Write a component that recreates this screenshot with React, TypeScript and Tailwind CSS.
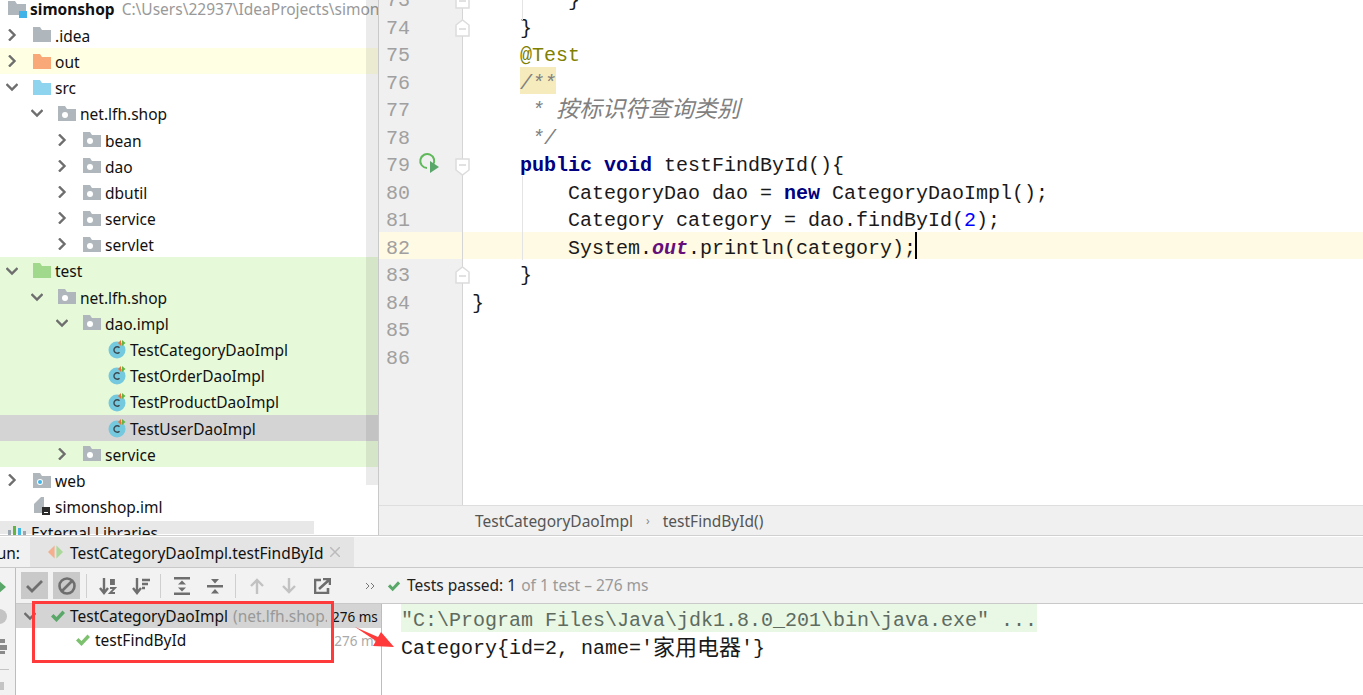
import React from 'react';

const Chevron = ({ open }: { open?: boolean }) => (
  <svg width="12" height="12" viewBox="0 0 12 12" fill="none" stroke="#6e6e6e" strokeWidth="2.4" className="shrink-0">
    {open ? <path d="M0.5 3 6 8.5 11.5 3" /> : <path d="M3 0.5 8.5 6 3 11.5" />}
  </svg>
);

const Folder = ({ color = '#afb7bd', dot }: { color?: string; dot?: string }) => (
  <svg width="18" height="15" viewBox="0 0 18 15" className="shrink-0">
    <path d="M0 0h7l2 3h9v12H0z" fill={color} />
    {dot && <circle cx="7" cy="9" r="3" fill="#fff" />}
    {dot && dot !== '#fff' && <circle cx="7" cy="9" r="2" fill={dot} />}
  </svg>
);

const ClassIcon = () => (
  <svg width="19" height="20" viewBox="0 0 19 20" className="shrink-0">
    <circle cx="9" cy="11" r="8.5" fill="#74c9de" />
    <path d="M11.5 8.8a3.2 3.2 0 1 0 0 4.4" fill="none" stroke="#3c4a50" strokeWidth="1.4" />
    <path d="M13 1v6l-3-3z" fill="#e8743c" />
    <path d="M14 1v6l3.5-3z" fill="#62b543" />
  </svg>
);

const ImlIcon = () => (
  <svg width="18" height="20" viewBox="0 0 18 20" className="shrink-0">
    <path d="M1 8l7-7h3v16H1z" fill="#afb7bd" />
    <rect x="9" y="11" width="8" height="8" fill="#2b2b2b" />
    <rect x="11" y="16" width="4" height="1" fill="#fff" />
  </svg>
);

type Row = {
  depth: number;
  label: string;
  open?: boolean;
  leaf?: boolean;
  icon: React.ReactNode;
  bg?: string;
};

const pkg = <Folder dot="#fff" />;
const green = 'bg-[#e6f9d9]';

const rows: Row[] = [
  { depth: 0, label: '.idea', icon: <Folder /> },
  { depth: 0, label: 'out', icon: <Folder color="#f9a878" />, bg: 'bg-[#ffffe4]' },
  { depth: 0, label: 'src', open: true, icon: <Folder color="#8ed4ee" /> },
  { depth: 1, label: 'net.lfh.shop', open: true, icon: pkg },
  { depth: 2, label: 'bean', icon: pkg },
  { depth: 2, label: 'dao', icon: pkg },
  { depth: 2, label: 'dbutil', icon: pkg },
  { depth: 2, label: 'service', icon: pkg },
  { depth: 2, label: 'servlet', icon: pkg },
  { depth: 0, label: 'test', open: true, icon: <Folder color="#a0d88c" />, bg: green },
  { depth: 1, label: 'net.lfh.shop', open: true, icon: pkg, bg: green },
  { depth: 2, label: 'dao.impl', open: true, icon: pkg, bg: green },
  { depth: 3, label: 'TestCategoryDaoImpl', leaf: true, icon: <ClassIcon />, bg: green },
  { depth: 3, label: 'TestOrderDaoImpl', leaf: true, icon: <ClassIcon />, bg: green },
  { depth: 3, label: 'TestProductDaoImpl', leaf: true, icon: <ClassIcon />, bg: green },
  { depth: 3, label: 'TestUserDaoImpl', leaf: true, icon: <ClassIcon />, bg: 'bg-[#d4d4d4]' },
  { depth: 2, label: 'service', icon: pkg, bg: green },
  { depth: 0, label: 'web', icon: <Folder dot="#3fb3e8" /> },
  { depth: 0, label: 'simonshop.iml', leaf: true, icon: <ImlIcon /> },
];

const indents = ['pl-[6px]', 'pl-[31px]', 'pl-[56px]', 'pl-[81px]'];

const Tree = () => (
  <div className="relative w-[379px] h-full overflow-hidden border-r border-[#c9c9c9] text-[15.5px] text-[#111]">
    <div className="-mt-[4.4px]">
      <div className="h-[26.2px] flex items-center pl-[8px] whitespace-nowrap">
        <svg width="20" height="20" viewBox="0 0 20 20" className="mr-[2px] shrink-0">
          <path d="M0 2h7l2 3h9v11H0z" fill="#afb7bd" />
          <rect x="11" y="12" width="8" height="7" fill="#3fb3e8" />
        </svg>
        <span className="font-bold pt-[2px]">simonshop</span>
        <span className="ml-[7px] pt-[2px] text-[#999]">C:\Users\22937\IdeaProjects\simonshop</span>
      </div>
      {rows.map((r, i) => (
        <div key={i} className={`h-[26.2px] flex items-center whitespace-nowrap ${indents[r.depth]} ${r.bg ?? ''}`}>
          <div className="w-[27px] flex">{!r.leaf && <Chevron open={r.open} />}</div>
          <div className="w-[22px] flex">{r.icon}</div>
          <span className="pt-[3px]">{r.label}</span>
        </div>
      ))}
      <div className="relative h-[26.2px] flex items-center pl-[8px] whitespace-nowrap">
        <div className="absolute left-0 top-[1.6px] w-[315px] h-[13px] bg-[#e8e8e8] border-r border-white" />
        <svg width="18" height="14" viewBox="0 0 18 14" className="relative mr-[5px]">
          <rect x="0" y="5" width="3" height="9" fill="#9aa7b0" />
          <rect x="5" y="1" width="3" height="13" fill="#62b543" />
          <rect x="10" y="3" width="3" height="11" fill="#40b6e0" />
          <rect x="15" y="6" width="3" height="8" fill="#9aa7b0" />
        </svg>
        <span className="relative pt-[3px]">External Libraries</span>
      </div>
    </div>
    {/* scrollbar */}
    <div className="absolute left-[366px] top-0 w-[12px] h-[485px] bg-black/[0.08]" />
  </div>
);

const Fold = ({ up }: { up?: boolean }) => (
  <svg
    width="15"
    height="18"
    viewBox="0 0 15 18"
    className={`absolute left-[76px] ${up ? 'top-[7px]' : 'top-[9px]'}`}
  >
    <path
      d={up ? 'M1 17V6l6.5-5L14 6v11z' : 'M1 1v11l6.5 5L14 12V1z'}
      fill="#fff"
      stroke="#dcdcdc"
      strokeWidth="1.5"
    />
    <path d={up ? 'M4 10h7' : 'M4 7h7'} stroke="#c4c4c4" strokeWidth="1" />
  </svg>
);

const RunIcon = () => (
  <svg width="22" height="24" viewBox="0 0 22 24" className="absolute left-[38px] top-[1px]">
    <path d="M16 15a7 7 0 1 0-6 3" fill="none" stroke="#5fb85a" strokeWidth="2" />
    <path d="M13 11l9 6-9 6z" fill="#59a869" />
  </svg>
);

const Kw = ({ children }: { children: React.ReactNode }) => (
  <span className="font-bold text-[#000080]">{children}</span>
);

const Cjk = ({ console: inConsole, children }: { console?: boolean; children: React.ReactNode }) => (
  <span
    className={`relative top-[1px] leading-none [font-family:'Noto_Sans_CJK_SC',sans-serif] ${
      inConsole ? 'text-[22px]' : 'text-[23px]'
    }`}
  >
    {children}
  </span>
);

const lines: { n: number; code?: React.ReactNode; fold?: 'up' | 'down'; run?: boolean; current?: boolean }[] = [
  { n: 73, code: '        }', fold: 'up' },
  { n: 74, code: '    }', fold: 'up' },
  { n: 75, code: <>{'    '}<span className="text-[#808000]">@Test</span></> },
  {
    n: 76,
    code: (
      <>
        <div className="absolute left-[57px] top-0 w-[36px] h-full bg-[#f6ebbc]" />
        <span className="relative italic text-[#808080]">{'    /**'}</span>
      </>
    ),
  },
  { n: 77, code: <span className="italic text-[#808080]">{'     * '}<Cjk>按标识符查询类别</Cjk></span> },
  { n: 78, code: <span className="italic text-[#808080]">{'     */'}</span> },
  {
    n: 79,
    run: true,
    fold: 'down',
    code: (
      <>
        {'    '}
        <Kw>public void</Kw> testFindById(){'{'}
      </>
    ),
  },
  { n: 80, code: <>{'        CategoryDao dao = '}<Kw>new</Kw>{' CategoryDaoImpl();'}</> },
  { n: 81, code: <>{'        Category category = dao.findById('}<span className="text-[#0000ff]">2</span>{');'}</> },
  {
    n: 82,
    current: true,
    code: (
      <>
        {'        System.'}
        <span className="italic font-bold text-[#660e7a]">out</span>
        {'.println(category);'}
        <div className="absolute left-[452px] top-0 w-[2px] h-full bg-black" />
      </>
    ),
  },
  { n: 83, code: '    }', fold: 'up' },
  { n: 84, code: '}' },
  { n: 85 },
  { n: 86 },
];

const Editor = () => (
  <div className="flex-1 flex flex-col min-w-0">
    <div className="relative h-[506px] flex flex-col overflow-hidden font-['Liberation_Mono',monospace] text-[20px] text-[#1a1a1a]">
      <div className="-mt-[16px]">
        {lines.map((l) => (
          <div key={l.n} className={`h-[27.5px] flex ${l.current ? 'bg-[#fffae3]' : ''}`}>
            <div
              className={`relative w-[84px] shrink-0 border-r border-[#d5d5d5] pl-[7px] leading-[34px] text-[#a0a0a0] ${
                l.current ? '' : 'bg-[#f0f0f0]'
              }`}
            >
              {l.n}
              {l.run && <RunIcon />}
              {l.fold && <Fold up={l.fold === 'up'} />}
            </div>
            <div className="relative flex-1 pl-[9px] whitespace-pre leading-[33px]">{l.code}</div>
          </div>
        ))}
      </div>
      <div className="flex-1 flex">
        <div className="w-[84px] bg-[#f0f0f0] border-r border-[#d5d5d5]" />
      </div>
      {/* indent guide */}
      <div className="absolute left-[143px] top-0 w-px h-[20px] bg-[#e4e4e4]" />
      <div className="absolute left-[143px] top-[176px] w-px h-[84px] bg-[#e4e4e4]" />
    </div>
    <div className="h-[30px] flex items-center border-t border-[#dedede] bg-[#f0f0f0] pl-[96px] text-[15.5px] text-[#555]">
      <span className="pt-[2px]">TestCategoryDaoImpl</span>
      <span className="mx-[13px] text-[12px] text-[#888]">›</span>
      <span className="pt-[2px]">testFindById()</span>
    </div>
  </div>
);

const Btn = ({ active, children }: { active?: boolean; children: React.ReactNode }) => (
  <div className={`w-[27px] h-[27px] flex items-center justify-center ${active ? 'bg-[#c9c9c9]' : ''}`}>{children}</div>
);

const Sep = () => <div className="w-px h-[24px] bg-[#cfcfcf]" />;

const Check = ({ color = '#59a869', size = 16 }: { color?: string; size?: number }) => (
  <svg width={size} height={size} viewBox="0 0 16 16" className="shrink-0">
    <path d="M1 8.5l2.5-2.5 3 3L12.5 2.5 15 5l-8.5 9z" fill={color} />
  </svg>
);

const G = '#6e6e6e';

const Toolbar = () => (
  <div className="h-[36px] flex items-center bg-[#f2f2f2] border-b border-[#c9c9c9]">
    <div className="w-[5px]" />
    <Btn active>
      <svg width="17" height="14" viewBox="0 0 17 14" fill="none" stroke={G} strokeWidth="2.8">
        <path d="M1 7l5 5L16 2" />
      </svg>
    </Btn>
    <div className="w-[5px]" />
    <Btn active>
      <svg width="18" height="18" viewBox="0 0 18 18" fill="none" stroke={G} strokeWidth="2.6">
        <circle cx="9" cy="9" r="7.5" />
        <path d="M4 14 14 4" />
      </svg>
    </Btn>
    <div className="w-[6px]" />
    <Sep />
    <div className="w-[12px]" />
    <svg width="18" height="18" viewBox="0 0 18 18" fill="none" stroke={G} strokeWidth="1.8">
      <path d="M5 1v15M1 11l4 5 4-5" strokeWidth="2.4" />
      <path d="M11 3h4v4h-4M15 5h-4M11 11h5l-5 5h5" />
    </svg>
    <div className="w-[15px]" />
    <svg width="18" height="18" viewBox="0 0 18 18" fill="none" stroke={G} strokeWidth="2.4">
      <path d="M5 1v15M1 11l4 5 4-5" />
      <path d="M10 3h8M10 7h6M10 11h3" />
    </svg>
    <div className="w-[10px]" />
    <Sep />
    <div className="w-[12px]" />
    <svg width="18" height="18" viewBox="0 0 18 18" fill={G}>
      <rect x="1" y="0" width="16" height="2.5" />
      <rect x="1" y="15.5" width="16" height="2.5" />
      <path d="M9 3.5l4 4H5zM9 14.5l-4-4h8z" />
    </svg>
    <div className="w-[15px]" />
    <svg width="18" height="18" viewBox="0 0 18 18" fill={G}>
      <rect x="1" y="8" width="16" height="2.5" />
      <path d="M9 6.5 5 2h8zM9 12l4 4.5H5z" />
    </svg>
    <div className="w-[11px]" />
    <Sep />
    <div className="w-[14px]" />
    <svg width="14" height="16" viewBox="0 0 14 16" fill="none" stroke="#c2c2c2" strokeWidth="2.4">
      <path d="M7 16V2M1 8l6-6 6 6" />
    </svg>
    <div className="w-[18px]" />
    <svg width="14" height="16" viewBox="0 0 14 16" fill="none" stroke="#c2c2c2" strokeWidth="2.4">
      <path d="M7 0v14M1 8l6 6 6-6" />
    </svg>
    <div className="w-[18px]" />
    <svg width="17" height="16" viewBox="0 0 17 16" fill="none" stroke={G} strokeWidth="2.6">
      <path d="M7 2H1v13h13V10M5 11 15 2M9 1h7v6" />
    </svg>
    <div className="w-[34px]" />
    <svg width="10" height="8" viewBox="0 0 10 8" fill="none" stroke="#777" strokeWidth="1">
      <path d="M1 1l3 3-3 3M6 1l3 3-3 3" />
    </svg>
    <div className="w-[12px]" />
    <Check size={14} />
    <span className="ml-[6px] text-[15.5px] text-[#222] whitespace-nowrap">Tests passed: 1</span>
    <span className="ml-[5px] text-[15.5px] text-[#999] whitespace-nowrap">of 1 test – 276 ms</span>
  </div>
);

const RunPanel = () => (
  <div className="flex-1 flex flex-col text-[15.5px] text-[#111] min-h-0">
    <div className="h-[31px] flex items-stretch bg-[#f1f1f1] border-t border-white">
      <div className="w-[30px] flex justify-end items-center overflow-hidden pr-[10px]">
        <span className="shrink-0 pt-[3px]">Run:</span>
      </div>
      <div className="w-[324px] flex items-center bg-[#e4e4e4] pl-[18px]">
        <svg width="15" height="16" viewBox="0 0 16 16" className="mr-[7px] shrink-0">
          <path d="M7 1v14L0 8z" fill="#f4b08e" />
          <path d="M9 1v14l7-7z" fill="#a9d89a" />
        </svg>
        <span className="whitespace-nowrap pt-[3px]">TestCategoryDaoImpl.testFindById</span>
        <svg width="10" height="10" viewBox="0 0 10 10" stroke="#bbb" strokeWidth="1.5" className="ml-[7px] shrink-0">
          <path d="M0 0l10 10M10 0 0 10" />
        </svg>
      </div>
    </div>
    <div className="flex-1 flex min-h-0 border-t border-[#c9c9c9]">
      {/* left stripe */}
      <div className="w-[16px] shrink-0 bg-[#f2f2f2] border-r border-[#bdbdbd] flex flex-col items-start overflow-hidden">
        <svg width="8" height="12" viewBox="0 0 8 12" className="mt-[13px] -ml-px shrink-0">
          <path d="M0 0l7 6-7 6z" fill="#59a869" />
        </svg>
        <div className="-ml-[8px] mt-[16px] w-[15px] h-[15px] shrink-0 rounded-full bg-[#c4c4c4]" />
        <svg width="8" height="16" viewBox="0 0 8 16" className="mt-[15px] shrink-0" fill="#8a8a8a">
          <rect x="0" y="0" width="5" height="4" />
          <rect x="0" y="6" width="7" height="5" />
          <rect x="0" y="12" width="5" height="3" />
        </svg>
        <div className="mt-[14px] w-[9px] h-px shrink-0 bg-[#c4c4c4]" />
        <div className="mt-[12px] w-[4px] h-[8px] shrink-0 bg-[#c4c4c4]" />
      </div>
      <div className="flex-1 flex flex-col min-w-0">
        <Toolbar />
        <div className="flex-1 flex min-h-0">
          <div className="w-[366px] shrink-0 border-r border-[#bdbdbd] overflow-hidden">
            <div className="h-[24px] flex items-center bg-[#d4d4d4] whitespace-nowrap">
              <div className="w-[34px] shrink-0 pl-[8px] flex">
                <Chevron open />
              </div>
              <Check color="#59a869" size={16} />
              <span className="ml-[4px] pt-[2px]">TestCategoryDaoImpl</span>
              <span className="ml-[5px] pt-[2px] text-[#999] w-[94px] shrink-0 overflow-hidden">(net.lfh.shop.</span>
              <span className="ml-[5px] pt-[2px] text-[13.5px]">276 ms</span>
            </div>
            <div className="h-[24px] flex items-center whitespace-nowrap">
              <div className="w-[59px] shrink-0" />
              <Check color="#7dc16f" size={16} />
              <span className="ml-[4px] pt-[2px]">testFindById</span>
              <span className="ml-[148px] pt-[2px] text-[13.5px] text-[#aaa]">276 ms</span>
            </div>
          </div>
          <div className="flex-1 pl-[19px] font-['Liberation_Mono',monospace] text-[20px] text-[#1a1a1a] leading-[34px] whitespace-pre overflow-hidden">
            <div className="h-[28px] w-[636px] bg-[#e9f7e5] text-[#5f6b5f]">"C:\Program Files\Java\jdk1.8.0_201\bin\java.exe" ...</div>
            <div className="h-[28px]">
              Category{'{'}id=2, name='<Cjk console>家用电器</Cjk>'{'}'}
            </div>
            <div className="h-[28px]" />
            <div className="h-[28px]">Process finished with exit code 0</div>
          </div>
        </div>
      </div>
    </div>
  </div>
);

export default function App() {
  return (
    <div className="relative w-[1363px] h-[695px] overflow-hidden bg-white font-['Noto_Sans',sans-serif]">
      <div className="h-[536px] flex border-b border-[#d0d0d0]">
        <Tree />
        <Editor />
      </div>
      <div className="h-[159px] flex">
        <RunPanel />
      </div>
      {/* annotation drawn on top of the screenshot */}
      <div className="absolute left-[32px] top-[601px] w-[302px] h-[62px] border-[3px] border-[#ff3a3a]" />
      <svg width="42" height="24" viewBox="0 0 42 24" className="absolute left-[354px] top-[626px]">
        <path d="M1 1l23 10 3-5 13 15-21-1 3-5z" fill="#ff3a3a" />
      </svg>
    </div>
  );
}
